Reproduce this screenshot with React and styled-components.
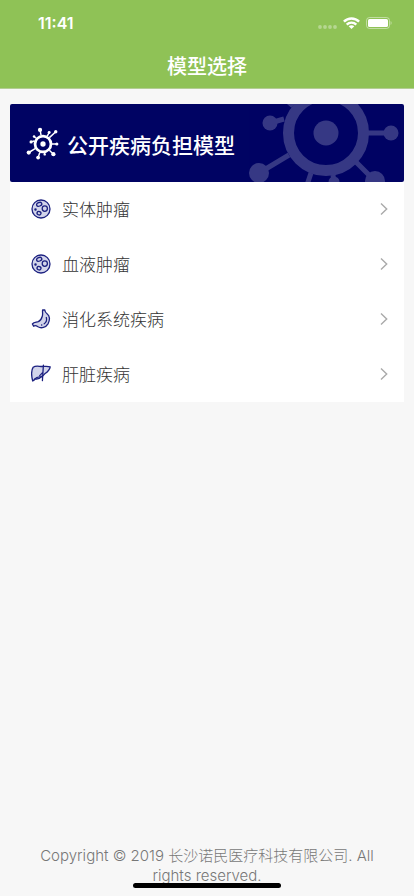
import React from "react";
import styled, { createGlobalStyle } from "styled-components";

const GlobalStyle = createGlobalStyle`
  * {
    box-sizing: border-box;
  }

  body {
    margin: 0;
    background: #f7f7f7;
    font-family: Inter, "Noto Sans CJK SC", sans-serif;
  }
`;

const Page = styled.div`
  display: flex;
  flex-direction: column;
  min-height: 100vh;
`;

const Header = styled.header`
  background: #8fc256;
  border-bottom: 1px solid #b3cd93;
  color: #fff;
`;

const StatusBar = styled.div`
  display: flex;
  align-items: center;
  justify-content: space-between;
  height: 44px;
  padding: 2px 22px 0 38px;
  font-size: 16px;
  font-weight: 600;
`;

const StatusIcons = styled.div`
  display: flex;
  align-items: center;
  gap: 6px;
`;

const Title = styled.h1`
  margin: 0;
  font-family: "Noto Sans CJK SC", sans-serif;
  font-size: 20px;
  font-weight: 500;
  line-height: 44px;
  text-align: center;
`;

const Card = styled.main`
  margin: 15px 10px 0;
  background: #fff;
`;

const Banner = styled.div`
  position: relative;
  display: flex;
  align-items: center;
  gap: 7px;
  height: 78px;
  padding: 2px 16px 0;
  border-radius: 2px;
  background: #000363;
  color: #fff;
  overflow: hidden;
`;

const BannerTitle = styled.h2`
  margin: 0;
  font-family: "Noto Sans CJK SC", sans-serif;
  font-size: 21px;
  font-weight: 500;
  line-height: 30px;
`;

const Backdrop = styled.div`
  position: absolute;
  top: -51px;
  right: -2px;
  height: 160px;
  opacity: 0.21;
`;

const List = styled.ul`
  margin: 0;
  padding: 0;
  list-style: none;
`;

const Row = styled.a`
  display: flex;
  align-items: center;
  gap: 11px;
  height: 55px;
  padding: 0 14px 2px 21px;
  color: #333;
  text-decoration: none;
`;

const RowLabel = styled.span`
  flex: 1;
  font-family: "Noto Sans CJK SC", sans-serif;
  font-size: 17px;
  font-weight: 300;
  line-height: 24px;
`;

const Footer = styled.footer`
  margin-top: auto;
  padding: 0 40px 10px;
  color: #777;
  font-size: 15px;
  font-weight: 300;
  line-height: 20px;
  text-align: center;
`;

const HomeIndicator = styled.div`
  position: fixed;
  bottom: 8px;
  left: 50%;
  width: 148px;
  height: 5px;
  margin-left: -74px;
  border-radius: 3px;
  background: #000;
`;

const virusNodes = [
  [-14, -66, 10],
  [29, -54, 7],
  [60, -58, 8],
  [-42, -35, 6],
  [-56, -10, 7.5],
  [-67, 40, 10],
  [-23, 64, 9],
  [8, 49, 5.5],
  [49, 48, 10],
  [65, 0, 7.5],
];

function VirusIcon({ size, lineWidth = 5 }) {
  return (
    <svg width={size} height={size} viewBox="-80 -80 160 160" aria-hidden="true">
      <g fill="none" stroke="#fff" strokeWidth={lineWidth}>
        <circle r="37.5" strokeWidth={lineWidth + 6} />
        <path d="M-9 -41L-14 -66M20 -37L29 -54M30 -30L60 -58M-33 -27L-42 -35M-42 -14L-56 -10M-37 22L-67 40M-15 40L-23 64M7 42L8 49M30 29L49 48M42 0H65" />
      </g>
      <g fill="#fff">
        <circle r="12.5" />
        {virusNodes.map(([x, y, r]) => (
          <circle key={`${x},${y}`} cx={x} cy={y} r={r} />
        ))}
      </g>
    </svg>
  );
}

function IconBase({ children }) {
  return (
    <svg
      width="20"
      height="20"
      viewBox="0 0 20 20"
      fill="#d2d4ea"
      stroke="#1c2180"
      strokeWidth="1.3"
      strokeLinecap="round"
      strokeLinejoin="round"
      aria-hidden="true"
    >
      {children}
    </svg>
  );
}

function CellIcon() {
  return (
    <IconBase>
      <circle cx="10" cy="10" r="9" />
      <ellipse cx="8.2" cy="5.3" rx="2.7" ry="1.8" transform="rotate(-20 8.2 5.3)" />
      <ellipse cx="13.8" cy="9.6" rx="2.6" ry="2.8" />
      <ellipse cx="8" cy="14.2" rx="2" ry="1.7" transform="rotate(25 8 14.2)" />
      <circle cx="4.5" cy="10.6" r="0.6" fill="#1c2180" />
    </IconBase>
  );
}

function StomachIcon() {
  return (
    <IconBase>
      <path d="M11.6 1C11.3 3.5 12 5 11.3 7.2C10.6 9.6 9.7 11.6 7.3 12.6C5.2 13.4 3 12.8 1.4 15L2.6 17.2C4 15.8 5.3 16.6 7 17.8C10.3 19.8 14.8 18.4 17 14.8C19.2 11 18.8 6.7 16.3 5C15 4.1 14.1 3.7 13.8 1Z" />
      <path d="M15.3 8.5C16.1 11 15.1 13.4 13.2 14.8M10.6 16H10.8" fill="none" />
    </IconBase>
  );
}

function LiverIcon() {
  return (
    <IconBase>
      <path d="M2.2 3.2C5 1.2 8.2 2.6 11.6 2.5C14 2.3 16.8 2 19.2 2.8C18.8 6.2 16.2 8 13.8 9.8C12.6 10.7 12.4 12 10.4 12.6C8 13 5.6 12.6 4 14.8C3.4 15.8 2.8 16.4 1.7 17C0.6 12.8 0.3 6.2 2.2 3.2Z" />
      <path d="M12.4 1.2L11.4 16.6M11.8 8.4L8.7 11.6M4 14.8C6.4 15.4 9 14.4 11.4 12" fill="none" />
    </IconBase>
  );
}

function Chevron() {
  return (
    <svg width="12" height="12" viewBox="0 0 12 12" aria-hidden="true">
      <path d="M3 0.5L8.7 6L3 11.5" fill="none" stroke="#aaa" strokeWidth="1.4" />
    </svg>
  );
}

function SignalDots() {
  return (
    <svg width="19" height="12" viewBox="0 0 19 12" fill="#fff" fillOpacity="0.35">
      {[2, 7, 12, 17].map((x) => (
        <circle key={x} cx={x} cy="10" r="1.9" />
      ))}
    </svg>
  );
}

function WifiIcon() {
  return (
    <svg width="17" height="12" viewBox="0 0 17 12" fill="none" stroke="#fff" strokeWidth="2.4">
      <path d="M0.9 4.6C5.1 0.4 11.9 0.4 16.1 4.6M3.7 7.6C6.4 5 10.6 5 13.3 7.6" />
      <path d="M8.5 12L5.7 9.3C7.3 8 9.7 8 11.3 9.3Z" fill="#fff" stroke="none" />
    </svg>
  );
}

function BatteryIcon() {
  return (
    <svg width="26" height="12" viewBox="0 0 26 12">
      <rect x="0.5" y="0.5" width="23" height="11" rx="3" fill="none" stroke="#fff" strokeOpacity="0.45" />
      <rect x="2" y="2" width="20" height="8" rx="1.6" fill="#fff" />
      <path d="M24.6 4C25.9 4.6 25.9 7.4 24.6 8Z" fill="#fff" fillOpacity="0.5" />
    </svg>
  );
}

const models = [
  { name: "实体肿瘤", Icon: CellIcon },
  { name: "血液肿瘤", Icon: CellIcon },
  { name: "消化系统疾病", Icon: StomachIcon },
  { name: "肝脏疾病", Icon: LiverIcon },
];

export default function App() {
  return (
    <Page>
      <GlobalStyle />
      <Header>
        <StatusBar>
          <span>11:41</span>
          <StatusIcons>
            <SignalDots />
            <WifiIcon />
            <BatteryIcon />
          </StatusIcons>
        </StatusBar>
        <Title>模型选择</Title>
      </Header>
      <Card>
        <Banner>
          <Backdrop>
            <VirusIcon size={160} />
          </Backdrop>
          <VirusIcon size={34} lineWidth={7} />
          <BannerTitle>公开疾病负担模型</BannerTitle>
        </Banner>
        <List>
          {models.map(({ name, Icon }) => (
            <li key={name}>
              <Row href="#">
                <Icon />
                <RowLabel>{name}</RowLabel>
                <Chevron />
              </Row>
            </li>
          ))}
        </List>
      </Card>
      <Footer>Copyright © 2019 长沙诺民医疗科技有限公司. All rights reserved.</Footer>
      <HomeIndicator />
    </Page>
  );
}
